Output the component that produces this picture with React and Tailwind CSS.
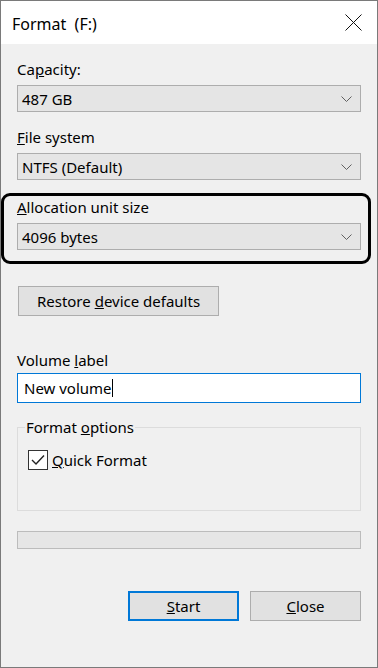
import React from "react";

function Chevron() {
  return (
    <svg width="11" height="6" viewBox="0 0 11 6" fill="none">
      <path d="M0.5 0.5 L5.5 5.5 L10.5 0.5" stroke="#606060" strokeWidth="1" />
    </svg>
  );
}

function Dropdown({ value }) {
  return (
    <div className="mt-[6px] h-[27px] border border-[#adadad] bg-[#e5e5e5] flex items-center justify-between pl-[4px] pr-[8px]">
      <span>{value}</span>
      <Chevron />
    </div>
  );
}

export default function App() {
  return (
    <div className="w-[378px] h-[668px] border border-[#7a7a7a] bg-[#f0f0f0] flex flex-col text-[15px] leading-[20px] text-black font-['Noto_Sans',sans-serif]">
      {/* Title bar */}
      <div className="h-[43px] bg-white flex items-center justify-between pl-[11px] pr-[15px] shrink-0">
        <span className="text-[16px] pt-[3px]">Format&nbsp; (F:)</span>
        <svg width="17" height="17" viewBox="0 0 17 17" fill="none">
          <path d="M0.5 0.5 L16.5 16.5 M16.5 0.5 L0.5 16.5" stroke="#111" strokeWidth="1" />
        </svg>
      </div>

      <div className="px-[16px] pt-[15px] flex flex-col">
        <div>
          Ca<span className="underline">p</span>acity:
        </div>
        <Dropdown value="487 GB" />

        <div className="mt-[15px]">
          <span className="underline">F</span>ile system
        </div>
        <Dropdown value="NTFS (Default)" />

        {/* Allocation section with highlight outline */}
        <div className="relative mt-[17px]">
          <div>
            <span className="underline">A</span>llocation unit size
          </div>
          <Dropdown value="4096 bytes" />
          <div className="absolute -top-[4px] -bottom-[14px] -left-[16px] -right-[10px] border-[3px] border-black rounded-[9px] pointer-events-none" />
        </div>

        <button className="mt-[36px] ml-[1px] w-[201px] h-[30px] border border-[#adadad] bg-[#e1e1e1] text-center">
          Restore <span className="underline">d</span>evice defaults
        </button>

        <div className="mt-[34px]">
          Volume <span className="underline">l</span>abel
        </div>
        <div className="mt-[3px] h-[30px] border border-[#0078d7] bg-white flex items-center pl-[6px]">
          <span>New volume</span>
          <span className="w-[1px] h-[18px] bg-black" />
        </div>

        <fieldset className="mt-[14px] h-[94px] border border-[#dcdcdc]">
          <legend className="ml-[7px] px-[1px]">
            Format <span className="underline">o</span>ptions
          </legend>
          <div className="mt-[13px] pl-[10px] flex items-center gap-[4px]">
            <div className="w-[20px] h-[20px] border border-[#333] bg-white flex items-center justify-center">
              <svg width="14" height="12" viewBox="0 0 14 12" fill="none">
                <path d="M1 6 L5 10 L13 1.5" stroke="#222" strokeWidth="1.4" />
              </svg>
            </div>
            <span>
              <span className="underline">Q</span>uick Format
            </span>
          </div>
        </fieldset>

        <div className="mt-[20px] h-[18px] border border-[#bcbcbc] bg-[#e6e6e6]" />

        <div className="mt-[42px] flex justify-end gap-[11px]">
          <button className="w-[111px] h-[30px] border-2 border-[#0078d7] bg-[#e1e1e1]">
            <span className="underline">S</span>tart
          </button>
          <button className="w-[111px] h-[30px] border border-[#adadad] bg-[#e1e1e1]">
            <span className="underline">C</span>lose
          </button>
        </div>
      </div>
    </div>
  );
}
